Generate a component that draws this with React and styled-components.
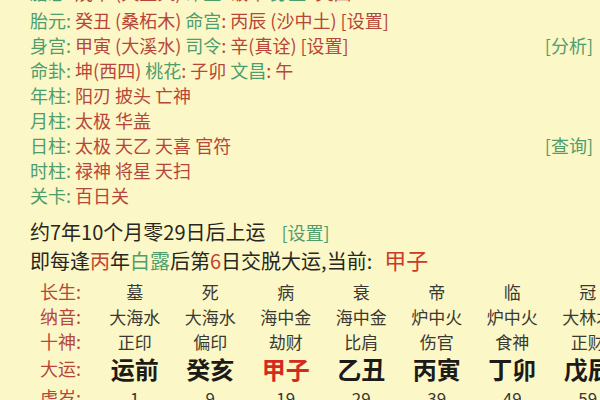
import styled, { createGlobalStyle } from 'styled-components';

const GlobalStyle = createGlobalStyle`
  html, body {
    margin: 0;
    padding: 0;
    background: #fcf7c6;
  }
  body {
    font-family: "Noto Sans CJK SC", "Noto Sans", sans-serif;
    overflow: hidden;
  }
`;

const info = [
  {
    label: '胎息',
    cut: true,
    parts: [{ t: '戊午 (天上火) ' }, { g: '命主' }, { t: ': 破军 ' }, { g: '身主' }, { t: ': 文曲' }],
  },
  {
    label: '胎元',
    parts: [{ t: '癸丑 (桑柘木) ' }, { g: '命宫' }, { t: ': 丙辰 (沙中土) [设置]' }],
  },
  {
    label: '身宫',
    parts: [{ t: '甲寅 (大溪水) ' }, { g: '司令' }, { t: ': 辛(真诠) [设置]' }],
    link: '[分析]',
  },
  {
    label: '命卦',
    parts: [{ t: '坤(西四) ' }, { g: '桃花' }, { t: ': 子卯 ' }, { g: '文昌' }, { t: ': 午' }],
  },
  { label: '年柱', parts: [{ t: '阳刃 披头 亡神' }] },
  { label: '月柱', parts: [{ t: '太极 华盖' }] },
  { label: '日柱', parts: [{ t: '太极 天乙 天喜 官符' }], link: '[查询]' },
  { label: '时柱', parts: [{ t: '禄神 将星 天扫' }] },
  { label: '关卡', parts: [{ t: '百日关' }] },
];

const columns = [
  { cs: '墓', ny: '大海水', ss: '正印', dy: '运前', age: '1' },
  { cs: '死', ny: '大海水', ss: '偏印', dy: '癸亥', age: '9' },
  { cs: '病', ny: '海中金', ss: '劫财', dy: '甲子', age: '19', now: true },
  { cs: '衰', ny: '海中金', ss: '比肩', dy: '乙丑', age: '29' },
  { cs: '帝', ny: '炉中火', ss: '伤官', dy: '丙寅', age: '39' },
  { cs: '临', ny: '炉中火', ss: '食神', dy: '丁卯', age: '49' },
  { cs: '冠', ny: '大林木', ss: '正财', dy: '戊辰', age: '59' },
];

const App = () => {
  return (
    <Page>
      <GlobalStyle />
      <InfoList>
        {info.map((row) => (
          <InfoRow key={row.label} $cut={row.cut}>
            <span>
              <Green>{row.label}</Green>
              <Green>: </Green>
              {row.parts.map((p, i) =>
                p.g ? <Green key={i}>{p.g}</Green> : <Red key={i}>{p.t}</Red>
              )}
            </span>
            {row.link && <Green>{row.link}</Green>}
          </InfoRow>
        ))}
      </InfoList>

      <StartLine>
        约7年10个月零29日后上运<SmallLink>[设置]</SmallLink>
      </StartLine>
      <SwitchLine>
        即每逢<Hi>丙</Hi>年<Lo>白露</Lo>后第<Hi>6</Hi>日交脱大运,当前:<Current>甲子</Current>
      </SwitchLine>

      <Luck>
        <RowLabel $h={25}>长生:</RowLabel>
        {columns.map((c) => (
          <Cell key={'cs' + c.age} $h={25}>{c.cs}</Cell>
        ))}
        <RowLabel $h={25}>纳音:</RowLabel>
        {columns.map((c) => (
          <Cell key={'ny' + c.age} $h={25}>{c.ny}</Cell>
        ))}
        <RowLabel $h={25}>十神:</RowLabel>
        {columns.map((c) => (
          <Cell key={'ss' + c.age} $h={25}>{c.ss}</Cell>
        ))}
        <RowLabel $h={29}>大运:</RowLabel>
        {columns.map((c) => (
          <BigCell key={'dy' + c.age} $now={c.now}>{c.dy}</BigCell>
        ))}
        <RowLabel $h={29}>虚岁:</RowLabel>
        {columns.map((c) => (
          <Cell key={'age' + c.age} $h={29}>{c.age}</Cell>
        ))}
      </Luck>
    </Page>
  );
};

const Page = styled.div`
  width: 600px;
  height: 400px;
  overflow: hidden;
  background: #fcf7c6;
`;

const InfoList = styled.div`
  margin-top: -17px;
  padding: 0 7px 0 30px;
  font-size: 18px;
`;

const InfoRow = styled.div`
  display: flex;
  justify-content: space-between;
  align-items: ${(p) => (p.$cut ? 'flex-start' : 'center')};
  height: 25px;
  line-height: ${(p) => (p.$cut ? '18px' : '25px')};
  white-space: nowrap;
`;

const Green = styled.span`
  color: #4e9d6d;
`;

const Red = styled.span`
  color: #b6463a;
`;

const StartLine = styled.div`
  margin-top: 10px;
  padding-left: 30px;
  height: 27px;
  line-height: 27px;
  font-size: 20px;
  color: #272622;
  white-space: nowrap;
`;

const SmallLink = styled.span`
  margin-left: 16px;
  font-size: 18px;
  color: #4e9d6d;
`;

const SwitchLine = styled.div`
  padding-left: 30px;
  height: 28px;
  line-height: 28px;
  font-size: 20px;
  color: #272622;
  white-space: nowrap;
`;

const Hi = styled.span`
  color: #c2432f;
`;

const Lo = styled.span`
  color: #4e9d6d;
`;

const Current = styled.span`
  margin-left: 12px;
  font-size: 22px;
  color: #cc3a2a;
`;

const Luck = styled.div`
  display: grid;
  grid-template-columns: 57px repeat(7, 75.5px);
  margin-top: 6px;
  padding-left: 40px;
  white-space: nowrap;
`;

const RowLabel = styled.div`
  height: ${(p) => p.$h}px;
  line-height: ${(p) => p.$h}px;
  font-size: 18px;
  color: #b5473c;
`;

const Cell = styled.div`
  height: ${(p) => p.$h}px;
  line-height: ${(p) => p.$h}px;
  text-align: center;
  font-size: 17px;
  color: #3a3933;
`;

const BigCell = styled.div`
  height: 29px;
  line-height: 29px;
  text-align: center;
  font-size: 24px;
  font-weight: bold;
  color: ${(p) => (p.$now ? '#d42b1f' : '#1c1b18')};
`;

export default App;
